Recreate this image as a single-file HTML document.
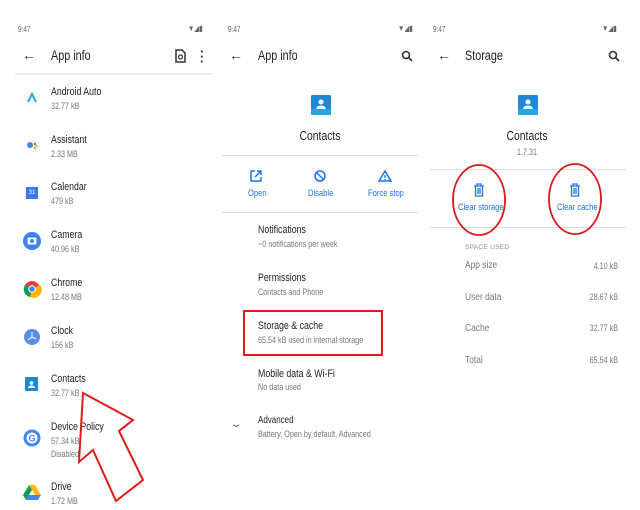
<!DOCTYPE html>
<html><head><meta charset="utf-8"><style>
body{margin:0;width:640px;height:510px;background:#fff;position:relative;overflow:hidden;font-family:"Liberation Sans",sans-serif;color:#202124}
.a{position:absolute;white-space:nowrap}
.st,.tb,.t,.s,.b,.sl{transform:scaleX(.8);transform-origin:0 0}
.ctr{transform-origin:50% 0 !important}
.rt{transform-origin:100% 0 !important}
.st{font-size:8px;color:#666}
.tb{font-size:13.5px;color:#222}
.t{font-size:11px;color:#222}
.s{font-size:9px;color:#777}
.b{font-size:9.5px;color:#1a73e8}
.sl{font-size:10.5px;color:#777}
.bk{font-size:14px;color:#333}
</style></head><body>
<!-- status bars -->
<div class="a st" style="left:18px;top:25px">9:47</div>
<div class="a st" style="left:188px;top:24px">▼◢▮</div>
<div class="a st" style="left:228px;top:25px">9:47</div>
<div class="a st" style="left:398px;top:24px">▼◢▮</div>
<div class="a st" style="left:433px;top:25px">9:47</div>
<div class="a st" style="left:602px;top:24px">▼◢▮</div>
<!-- headers -->
<div class="a bk" style="left:22px;top:47px">←</div>
<div class="a tb" style="left:51px;top:48px">App info</div>
<svg class="a" style="left:174px;top:49px" width="12" height="14"><path d="M2 1h6l3 3v9H2z" fill="none" stroke="#333" stroke-width="1.5"/><circle cx="6.5" cy="8" r="2" fill="none" stroke="#333" stroke-width="1.2"/></svg>
<div class="a" style="left:200px;top:49px;font-size:13px;font-weight:bold;color:#333;line-height:5px">·<br>·<br>·</div>
<div class="a" style="left:15px;top:73px;width:198px;height:2px;background:#eee"></div>
<div class="a bk" style="left:229px;top:47px">←</div>
<div class="a tb" style="left:258px;top:48px">App info</div>
<svg class="a" style="left:401px;top:50px" width="12" height="12"><circle cx="5" cy="5" r="3.5" fill="none" stroke="#333" stroke-width="1.6"/><path d="M7.5 7.5L11 11" stroke="#333" stroke-width="1.8"/></svg>
<div class="a bk" style="left:437px;top:47px">←</div>
<div class="a tb" style="left:465px;top:48px">Storage</div>
<svg class="a" style="left:608px;top:50px" width="12" height="12"><circle cx="5" cy="5" r="3.5" fill="none" stroke="#333" stroke-width="1.6"/><path d="M7.5 7.5L11 11" stroke="#333" stroke-width="1.8"/></svg>
<!-- left list -->
<svg class="a" style="left:22px;top:88px" width="20" height="20"><circle cx="10" cy="10" r="9" fill="#fafafa"/><path d="M6 14L10 6L14 14" fill="none" stroke="#2aa3e0" stroke-width="2"/></svg>
<div class="a t" style="left:51px;top:86px">Android Auto</div><div class="a s" style="left:51px;top:101px">32.77 kB</div>
<svg class="a" style="left:22px;top:136px" width="20" height="20"><circle cx="8" cy="9" r="3" fill="#4285f4"/><circle cx="13" cy="8" r="1.2" fill="#ea4335"/><circle cx="13" cy="12" r="1.3" fill="#fbbc04"/><circle cx="14.5" cy="10" r="0.9" fill="#34a853"/></svg>
<div class="a t" style="left:51px;top:134px">Assistant</div><div class="a s" style="left:51px;top:149px">2.33 MB</div>
<div class="a" style="left:26px;top:187px;width:12px;height:12px;background:#3b78e7;color:#fff;font-size:6px;text-align:center;line-height:13px">31</div>
<div class="a t" style="left:51px;top:181px">Calendar</div><div class="a s" style="left:51px;top:196px">479 kB</div>
<svg class="a" style="left:22px;top:231px" width="20" height="20"><circle cx="10" cy="10" r="9" fill="#3b82f0"/><rect x="5.5" y="6.5" width="9" height="7" rx="1.5" fill="#fff"/><circle cx="10" cy="10" r="2" fill="#3b82f0"/></svg>
<div class="a t" style="left:51px;top:229px">Camera</div><div class="a s" style="left:51px;top:244px">40.96 kB</div>
<svg class="a" style="left:22px;top:279px" width="20" height="20"><circle cx="10" cy="10" r="8" fill="#db4437"/><path d="M10 10L3 6A8 8 0 0 0 8 18z" fill="#0f9d58"/><path d="M10 10L8 18A8 8 0 0 0 18 6z" fill="#f4b400"/><circle cx="10" cy="10" r="3.8" fill="#fff"/><circle cx="10" cy="10" r="2.8" fill="#4285f4"/></svg>
<div class="a t" style="left:51px;top:277px">Chrome</div><div class="a s" style="left:51px;top:292px">12.48 MB</div>
<svg class="a" style="left:22px;top:327px" width="20" height="20"><circle cx="10" cy="10" r="8" fill="#5a8fe8"/><path d="M10 5V10L6 13M10 10L14 12" stroke="#fff" stroke-width="1" fill="none"/></svg>
<div class="a t" style="left:51px;top:325px">Clock</div><div class="a s" style="left:51px;top:340px">156 kB</div>
<svg class="a" style="left:24px;top:376px" width="16" height="16"><rect x="1" y="1" width="13" height="14" rx="1" fill="#1f88d6"/><circle cx="7.5" cy="7" r="1.8" fill="#fff"/><path d="M4 12a3.5 2.5 0 0 1 7 0z" fill="#fff"/></svg>
<div class="a t" style="left:51px;top:373px">Contacts</div><div class="a s" style="left:51px;top:388px">32.77 kB</div>
<svg class="a" style="left:22px;top:428px" width="20" height="20"><circle cx="10" cy="10" r="8.5" fill="#4285f4"/><circle cx="10" cy="10" r="5.5" fill="#fff"/><text x="10" y="13.5" font-size="9" font-weight="bold" fill="#4285f4" text-anchor="middle" font-family="Liberation Sans">G</text></svg>
<div class="a t" style="left:51px;top:421px">Device Policy</div><div class="a s" style="left:51px;top:436px">57.34 kB</div><div class="a s" style="left:51px;top:449px">Disabled</div>
<svg class="a" style="left:22px;top:483px" width="20" height="18"><path d="M7 2h6l6 10h-6z" fill="#fbbc04"/><path d="M7 2L1 12l3 5 6-10z" fill="#0f9d58"/><path d="M4 17h12l3-5H7z" fill="#4285f4"/></svg>
<div class="a t" style="left:51px;top:481px">Drive</div><div class="a s" style="left:51px;top:496px">1.72 MB</div>
<svg class="a" style="left:0;top:0" width="213" height="510"><polygon points="83,393 133,420 119,431 143,480 116,501 93,450 79,462" fill="none" stroke="#e01b1b" stroke-width="2"/></svg>
<!-- middle -->
<svg class="a" style="left:310px;top:94px" width="22" height="24"><rect x="1" y="1" width="20" height="20" rx="1.5" fill="#1f88d6"/><rect x="1" y="15" width="20" height="6" fill="#29a3ec"/><circle cx="11" cy="8" r="2.5" fill="#fff"/><path d="M6 15a5 3.5 0 0 1 10 0z" fill="#fff"/></svg>
<div class="a tb ctr" style="left:213px;width:214px;top:128px;text-align:center;font-size:13px">Contacts</div>
<div class="a" style="left:222px;top:155px;width:197px;height:1px;background:#ddd"></div>
<svg class="a" style="left:249px;top:169px" width="14" height="14"><path d="M6 2H2v10h10V8M8 2h4v4M12 2L6 8" fill="none" stroke="#1a73e8" stroke-width="1.5"/></svg>
<svg class="a" style="left:313px;top:169px" width="14" height="14"><circle cx="7" cy="7" r="5" fill="none" stroke="#1a73e8" stroke-width="1.5"/><path d="M3 3l8 8" stroke="#1a73e8" stroke-width="1.5"/></svg>
<svg class="a" style="left:378px;top:169px" width="14" height="14"><path d="M7 2L1 12h12z" fill="none" stroke="#1a73e8" stroke-width="1.5"/><path d="M7 6v3M7 10v1" stroke="#1a73e8" stroke-width="1.3"/></svg>
<div class="a b" style="left:248px;top:188px">Open</div>
<div class="a b" style="left:308px;top:188px">Disable</div>
<div class="a b" style="left:368px;top:188px">Force stop</div>
<div class="a" style="left:222px;top:212px;width:197px;height:1px;background:#ddd"></div>
<div class="a t" style="left:258px;top:224px">Notifications</div><div class="a s" style="left:258px;top:239px">~0 notifications per week</div>
<div class="a t" style="left:258px;top:272px">Permissions</div><div class="a s" style="left:258px;top:287px">Contacts and Phone</div>
<div class="a t" style="left:258px;top:320px">Storage &amp; cache</div><div class="a s" style="left:258px;top:335px">65.54 kB used in internal storage</div>
<div class="a" style="left:243px;top:310px;width:136px;height:42px;border:2px solid #e01b1b"></div>
<div class="a t" style="left:258px;top:368px">Mobile data &amp; Wi-Fi</div><div class="a s" style="left:258px;top:382px">No data used</div>
<div class="a" style="left:232px;top:419px;font-size:10px;color:#555;transform:scaleX(1.4)">⌄</div>
<div class="a t" style="left:258px;top:415px;font-size:10px">Advanced</div><div class="a s" style="left:258px;top:429px">Battery, Open by default, Advanced</div>
<!-- right -->
<svg class="a" style="left:517px;top:94px" width="22" height="24"><rect x="1" y="1" width="20" height="20" rx="1.5" fill="#1f88d6"/><rect x="1" y="15" width="20" height="6" fill="#29a3ec"/><circle cx="11" cy="8" r="2.5" fill="#fff"/><path d="M6 15a5 3.5 0 0 1 10 0z" fill="#fff"/></svg>
<div class="a tb ctr" style="left:426px;width:202px;top:128px;text-align:center;font-size:13px">Contacts</div>
<div class="a s ctr" style="left:426px;width:202px;top:147px;text-align:center">1.7.31</div>
<div class="a" style="left:429px;top:169px;width:198px;height:1px;background:#ddd"></div>
<svg class="a" style="left:473px;top:183px" width="12" height="14"><path d="M1 3h10M4 3V1h4v2M2.5 3v10h7V3M5 5v6M7 5v6" fill="none" stroke="#1a73e8" stroke-width="1.3"/></svg>
<svg class="a" style="left:569px;top:183px" width="12" height="14"><path d="M1 3h10M4 3V1h4v2M2.5 3v10h7V3M5 5v6M7 5v6" fill="none" stroke="#1a73e8" stroke-width="1.3"/></svg>
<div class="a b" style="left:458px;top:202px">Clear storage</div>
<div class="a b" style="left:557px;top:202px">Clear cache</div>
<div class="a" style="left:429px;top:227px;width:198px;height:1px;background:#ddd"></div>
<svg class="a" style="left:426px;top:160px" width="214" height="80"><ellipse cx="53" cy="40" rx="26" ry="35" fill="none" stroke="#d91a1a" stroke-width="1.8"/><ellipse cx="149" cy="39" rx="26" ry="35" fill="none" stroke="#d91a1a" stroke-width="1.8"/></svg>
<div class="a" style="left:465px;top:244px;font-size:6.5px;color:#888;letter-spacing:.3px">SPACE USED</div>
<div class="a sl" style="left:465px;top:259px">App size</div><div class="a s rt" style="left:560px;width:58px;text-align:right;top:261px">4.10 kB</div>
<div class="a sl" style="left:465px;top:291px">User data</div><div class="a s rt" style="left:560px;width:58px;text-align:right;top:292px">28.67 kB</div>
<div class="a sl" style="left:465px;top:322px">Cache</div><div class="a s rt" style="left:560px;width:58px;text-align:right;top:323px">32.77 kB</div>
<div class="a sl" style="left:465px;top:354px">Total</div><div class="a s rt" style="left:560px;width:58px;text-align:right;top:355px">65.54 kB</div>
</body></html>
